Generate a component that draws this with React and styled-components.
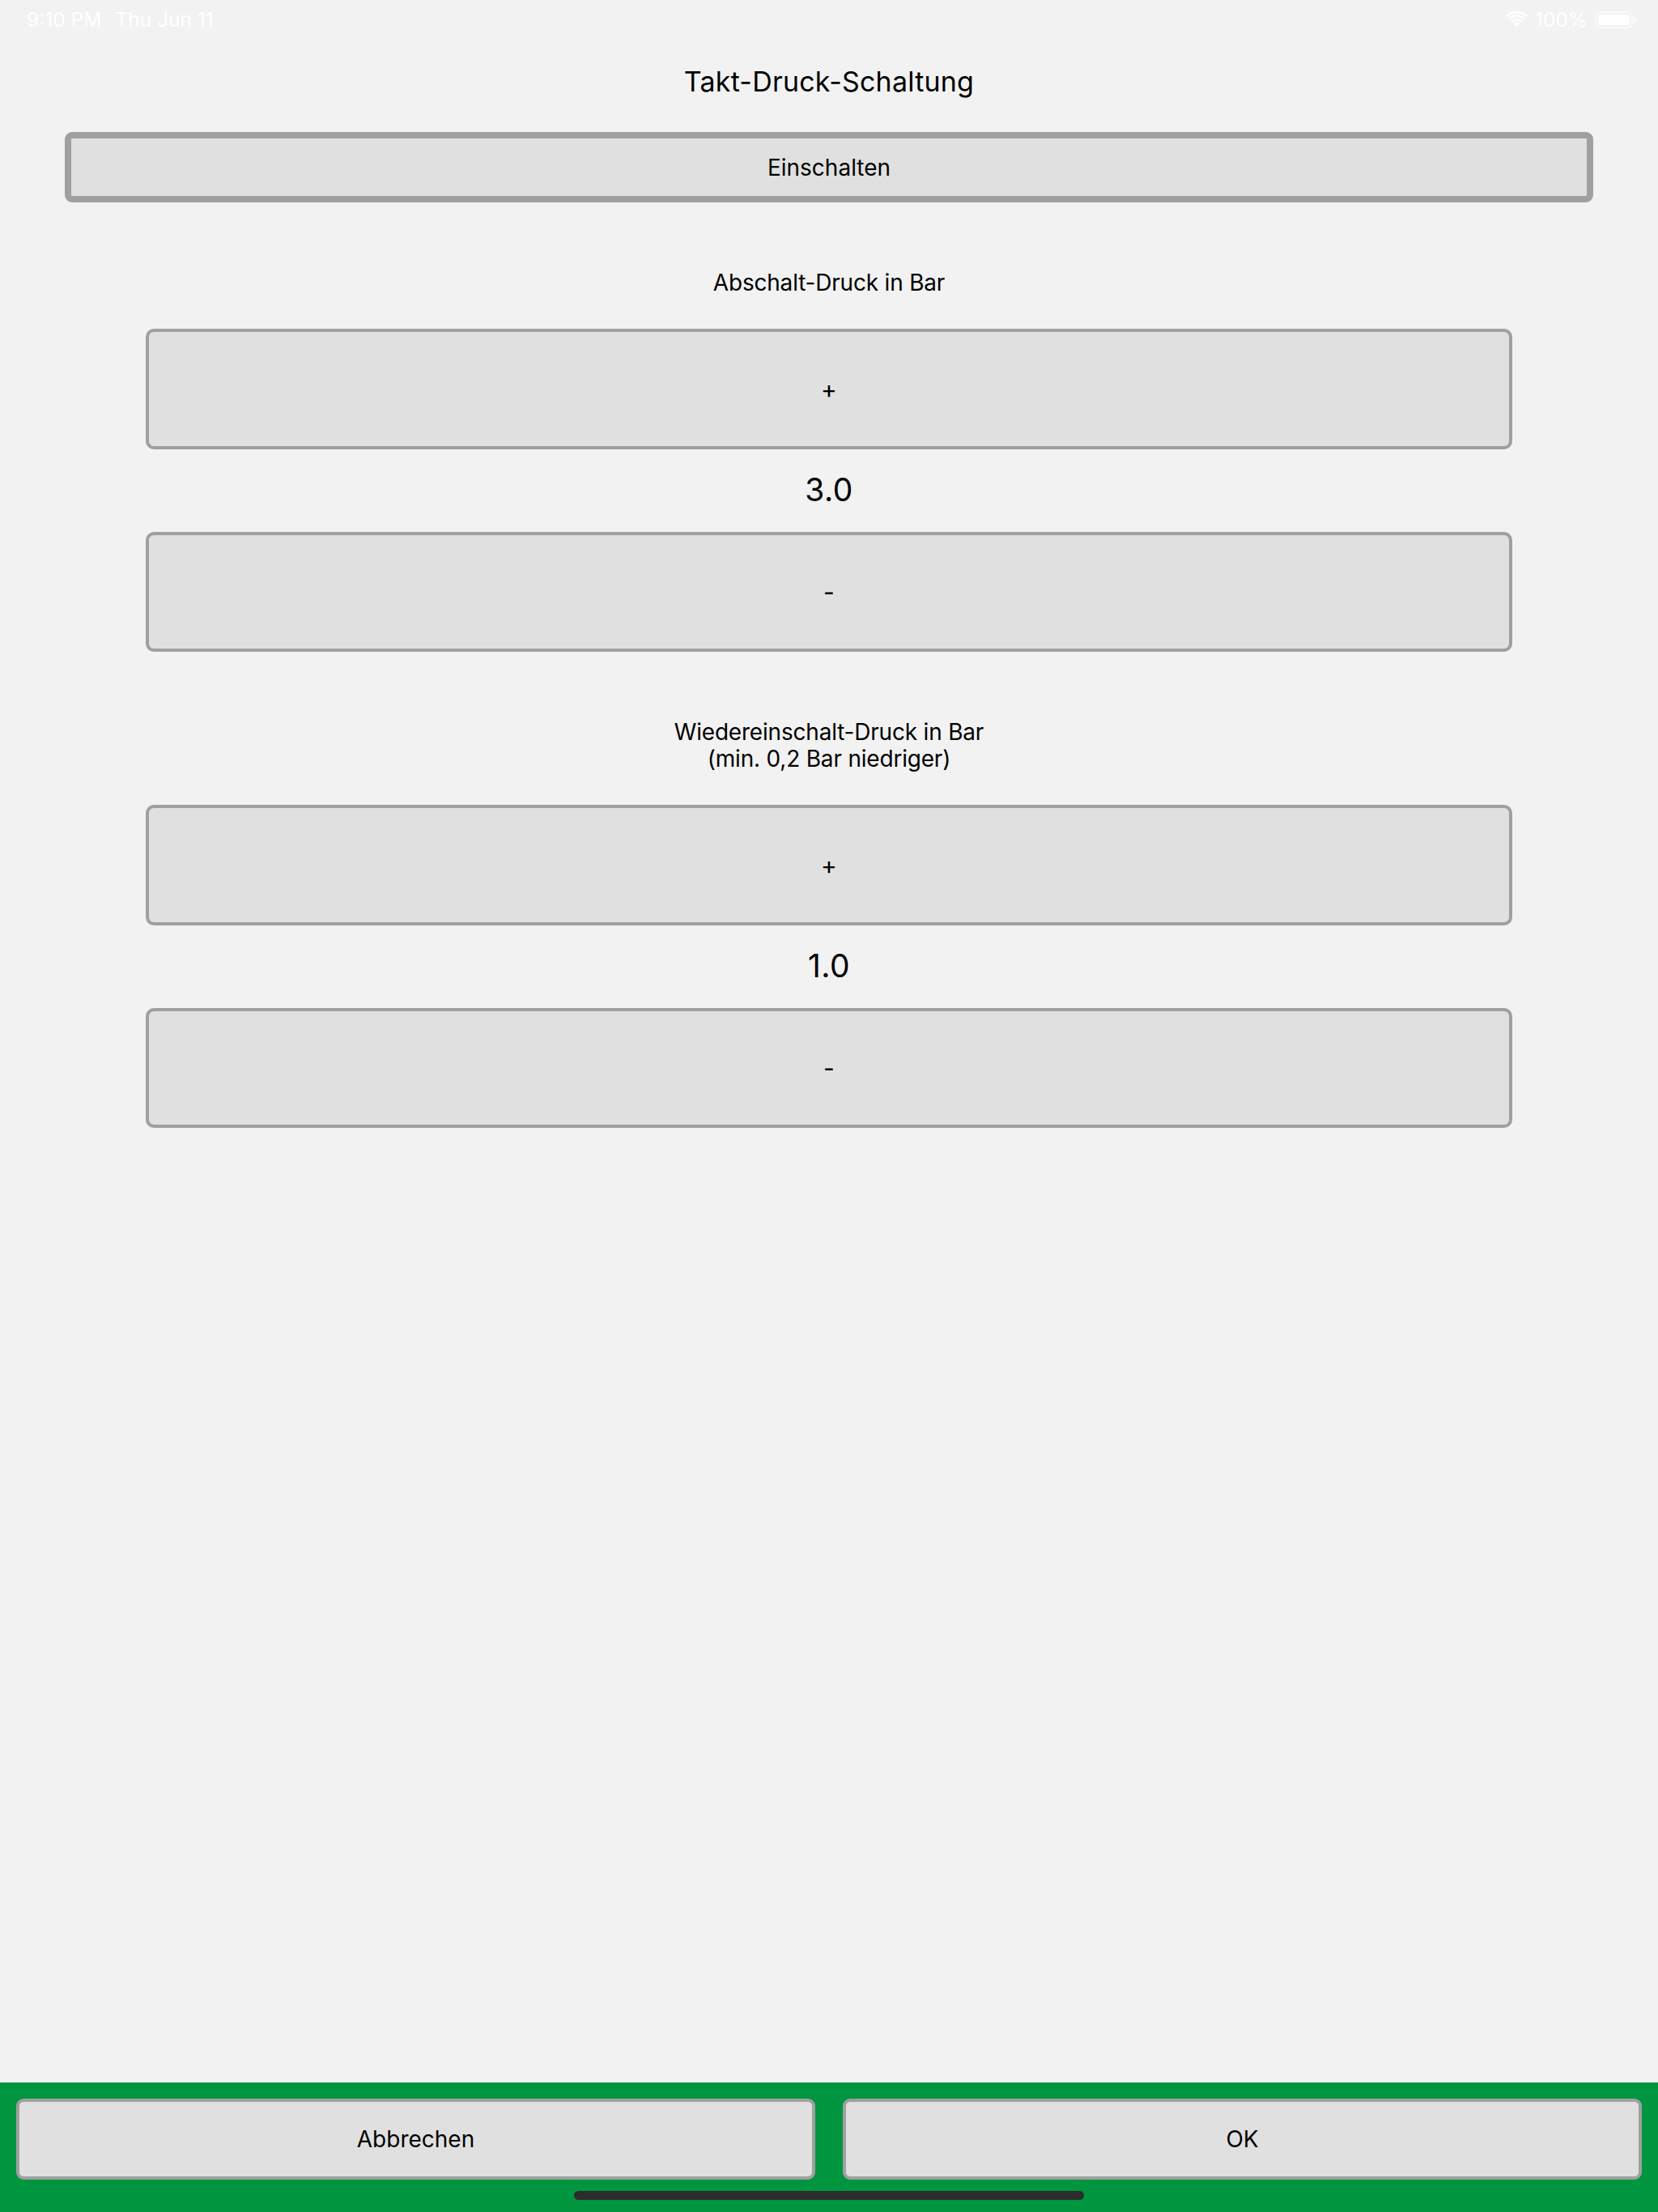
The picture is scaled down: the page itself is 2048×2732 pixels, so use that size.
import React, { useState } from 'react';
import styled, { createGlobalStyle } from 'styled-components';

const GlobalStyle = createGlobalStyle`
  html, body {
    margin: 0;
    padding: 0;
    background: #f2f2f2;
  }
  * {
    box-sizing: border-box;
  }
`;

const Screen = styled.div`
  position: relative;
  min-height: 2732px;
  display: flex;
  flex-direction: column;
  background: #f2f2f2;
  font-family: Inter, "Noto Sans", sans-serif;
  color: #000;
`;

const StatusBar = styled.div`
  height: 50px;
  display: flex;
  align-items: center;
  justify-content: space-between;
  padding: 0 31px 2px 33px;
  color: #fff;
  font-size: 24.5px;
`;

const StatusGroup = styled.div`
  display: flex;
  align-items: center;
  gap: ${({ gap }) => gap || 10}px;
`;

const Battery = styled.div`
  position: relative;
  width: 47px;
  height: 21px;
  border: 2px solid rgba(255, 255, 255, 0.6);
  border-radius: 6px;
  padding: 2px;

  &::before {
    content: '';
    display: block;
    height: 100%;
    border-radius: 3px;
    background: #fff;
  }

  &::after {
    content: '';
    position: absolute;
    right: -6px;
    top: 5px;
    width: 3px;
    height: 7px;
    border-radius: 0 2px 2px 0;
    background: rgba(255, 255, 255, 0.6);
  }
`;

const Title = styled.h1`
  margin: 31px 0 0;
  font-size: 34px;
  font-weight: 400;
  line-height: 40px;
  text-align: center;
  letter-spacing: 0.2px;
`;

const Button = styled.button`
  display: flex;
  align-items: center;
  justify-content: center;
  width: 100%;
  height: ${({ h }) => h}px;
  background: #e0e0e0;
  border: ${({ bw }) => bw}px solid #a0a0a0;
  border-radius: ${({ r }) => r}px;
  font-family: inherit;
  font-size: ${({ fs }) => fs || 28}px;
  color: #000;
  padding: 0;
  cursor: pointer;
`;

const ToggleWrap = styled.div`
  margin: 42px 80px 0;
`;

const Section = styled.section`
  margin-top: 83px;
  padding: 0 180px;
  display: flex;
  flex-direction: column;
`;

const Label = styled.div`
  font-size: 28px;
  line-height: 33px;
  text-align: center;
  letter-spacing: -0.2px;
  margin-bottom: 40px;
`;

const Value = styled.div`
  height: 102px;
  display: flex;
  align-items: center;
  justify-content: center;
  font-size: 39px;
  letter-spacing: 0.5px;
  padding-bottom: 3px;
`;

const Spacer = styled.div`
  flex: 1;
`;

const BottomBar = styled.div`
  position: relative;
  height: 160px;
  background: #00953f;
  display: grid;
  grid-template-columns: 1fr 1fr;
  gap: 34px;
  align-items: start;
  padding: 20px 20px 0;
`;

const HomeIndicator = styled.div`
  position: absolute;
  left: 50%;
  bottom: 15px;
  width: 630px;
  height: 11px;
  margin-left: -315px;
  border-radius: 6px;
  background: #2c2c2c;
`;

const WifiIcon = () => (
  <svg width="27" height="20" viewBox="0 0 27 20">
    <path d="M13.5 19.5 L9.3 15.1 A6 6 0 0 1 17.7 15.1 Z" fill="#fff" />
    <path d="M6.4 12.1 A10 10 0 0 1 20.6 12.1 L18.8 14 A7.4 7.4 0 0 0 8.2 14 Z" fill="#fff" />
    <path d="M3.1 8.7 A14.6 14.6 0 0 1 23.9 8.7 L22 10.6 A12 12 0 0 0 5 10.6 Z" fill="#fff" />
    <path d="M0 5.4 A19 19 0 0 1 27 5.4 L25.2 7.3 A16.4 16.4 0 0 0 1.8 7.3 Z" fill="#fff" />
  </svg>
);

const Stepper = ({ label, value, onChange }) => (
  <Section>
    <Label>{label}</Label>
    <Button h={149} bw={4} r={10} fs={30} onClick={() => onChange(value + 0.1)}>+</Button>
    <Value>{value.toFixed(1)}</Value>
    <Button h={148} bw={4} r={10} fs={30} onClick={() => onChange(value - 0.1)}>-</Button>
  </Section>
);

const App = () => {
  const [off, setOff] = useState(3.0);
  const [on, setOn] = useState(1.0);

  return (
    <Screen>
      <GlobalStyle />
      <StatusBar>
        <StatusGroup gap={17}>
          <span>9:10 PM</span>
          <span>Thu Jun 11</span>
        </StatusGroup>
        <StatusGroup gap={9}>
          <WifiIcon />
          <span>100%</span>
          <Battery />
        </StatusGroup>
      </StatusBar>

      <Title>Takt-Druck-Schaltung</Title>

      <ToggleWrap>
        <Button h={87} bw={8} r={9}>Einschalten</Button>
      </ToggleWrap>

      <Stepper label="Abschalt-Druck in Bar" value={off} onChange={setOff} />
      <Stepper
        label={<>Wiedereinschalt-Druck in Bar<br />(min. 0,2 Bar niedriger)</>}
        value={on}
        onChange={setOn}
      />

      <Spacer />

      <BottomBar>
        <Button h={100} bw={4} r={9}>Abbrechen</Button>
        <Button h={100} bw={4} r={9}>OK</Button>
        <HomeIndicator />
      </BottomBar>
    </Screen>
  );
};

export default App;
